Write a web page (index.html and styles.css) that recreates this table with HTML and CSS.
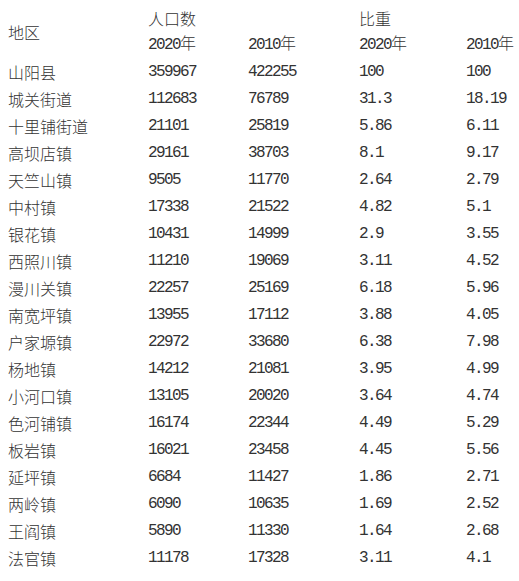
FILE: index.html
```html
<!DOCTYPE html>
<html lang="zh">
<head>
<meta charset="utf-8">
<link rel="stylesheet" href="styles.css">
</head>
<body>
<table class="data">
  <colgroup>
    <col class="c1"><col class="c2"><col class="c3"><col class="c4"><col class="c5">
  </colgroup>
  <thead>
    <tr><th rowspan="2" class="name">地区</th><th colspan="2">人口数</th><th colspan="2">比重</th></tr>
    <tr><th class="num">2020年</th><th class="num">2010年</th><th class="num">2020年</th><th class="num">2010年</th></tr>
  </thead>
  <tbody>
    <tr><td class="name">山阳县</td><td>359967</td><td>422255</td><td>100</td><td>100</td></tr>
    <tr><td class="name">城关街道</td><td>112683</td><td>76789</td><td>31.3</td><td>18.19</td></tr>
    <tr><td class="name">十里铺街道</td><td>21101</td><td>25819</td><td>5.86</td><td>6.11</td></tr>
    <tr><td class="name">高坝店镇</td><td>29161</td><td>38703</td><td>8.1</td><td>9.17</td></tr>
    <tr><td class="name">天竺山镇</td><td>9505</td><td>11770</td><td>2.64</td><td>2.79</td></tr>
    <tr><td class="name">中村镇</td><td>17338</td><td>21522</td><td>4.82</td><td>5.1</td></tr>
    <tr><td class="name">银花镇</td><td>10431</td><td>14999</td><td>2.9</td><td>3.55</td></tr>
    <tr><td class="name">西照川镇</td><td>11210</td><td>19069</td><td>3.11</td><td>4.52</td></tr>
    <tr><td class="name">漫川关镇</td><td>22257</td><td>25169</td><td>6.18</td><td>5.96</td></tr>
    <tr><td class="name">南宽坪镇</td><td>13955</td><td>17112</td><td>3.88</td><td>4.05</td></tr>
    <tr><td class="name">户家塬镇</td><td>22972</td><td>33680</td><td>6.38</td><td>7.98</td></tr>
    <tr><td class="name">杨地镇</td><td>14212</td><td>21081</td><td>3.95</td><td>4.99</td></tr>
    <tr><td class="name">小河口镇</td><td>13105</td><td>20020</td><td>3.64</td><td>4.74</td></tr>
    <tr><td class="name">色河铺镇</td><td>16174</td><td>22344</td><td>4.49</td><td>5.29</td></tr>
    <tr><td class="name">板岩镇</td><td>16021</td><td>23458</td><td>4.45</td><td>5.56</td></tr>
    <tr><td class="name">延坪镇</td><td>6684</td><td>11427</td><td>1.86</td><td>2.71</td></tr>
    <tr><td class="name">两岭镇</td><td>6090</td><td>10635</td><td>1.69</td><td>2.52</td></tr>
    <tr><td class="name">王阎镇</td><td>5890</td><td>11330</td><td>1.64</td><td>2.68</td></tr>
    <tr><td class="name">法官镇</td><td>11178</td><td>17328</td><td>3.11</td><td>4.1</td></tr>
  </tbody>
</table>
</body>
</html>
```

FILE: styles.css
```css
html, body {
  margin: 0;
  padding: 0;
  background: #ffffff;
}

.data {
  border-collapse: collapse;
  table-layout: fixed;
  width: 519px;
  margin-top: 5px;
  color: #333333;
  font-family: "Liberation Mono", "Noto Sans CJK SC", monospace;
  font-size: 16px;
  font-weight: 300;
  letter-spacing: -1.6px;
}

.c1 { width: 148px; }
.c2 { width: 100px; }
.c3 { width: 111px; }
.c4 { width: 107px; }
.c5 { width: 53px; }

.data th,
.data td {
  height: 27px;
  padding: 0;
  line-height: 27px;
  text-align: left;
  vertical-align: middle;
  font-weight: 300;
  white-space: nowrap;
}

.data th {
  font-family: "Noto Sans CJK SC", sans-serif;
  letter-spacing: 0;
}

.data th.num {
  font-family: "Liberation Mono", "Noto Sans CJK SC", monospace;
  letter-spacing: -1.6px;
}

.data .name {
  padding-left: 8px;
  font-family: "Noto Sans CJK SC", sans-serif;
  letter-spacing: 0;
}
```
